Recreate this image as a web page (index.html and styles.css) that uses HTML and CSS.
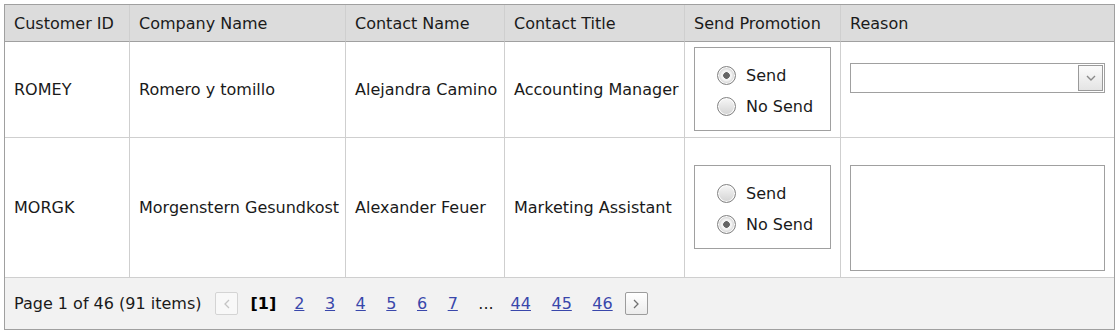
FILE: index.html
```html
<!DOCTYPE html>
<html lang="en">
<head>
    <meta charset="UTF-8">
    <title>Customers - Send Promotion</title>
    <link rel="stylesheet" href="styles.css">
</head>
<body>
    <table class="grid">
        <thead>
            <tr class="grid-header">
                <th class="col-id">Customer ID</th>
                <th class="col-company">Company Name</th>
                <th class="col-contact">Contact Name</th>
                <th class="col-title">Contact Title</th>
                <th class="col-promo">Send Promotion</th>
                <th class="col-reason">Reason</th>
            </tr>
        </thead>
        <tbody>
            <tr class="row-first">
                <td>ROMEY</td>
                <td>Romero y tomillo</td>
                <td>Alejandra Camino</td>
                <td>Accounting Manager</td>
                <td>
                    <div class="radio-box">
                        <label class="radio"><input type="radio" name="promo-romey" checked> Send</label>
                        <label class="radio"><input type="radio" name="promo-romey"> No Send</label>
                    </div>
                </td>
                <td class="reason reason-select">
                    <div class="combo">
                        <span class="combo-text"></span>
                        <span class="combo-btn">
                            <svg width="10" height="6" viewBox="0 0 10 6"><path d="M1 1l4 4 4-4" fill="none" stroke="#8a8a8a" stroke-width="1.4"/></svg>
                        </span>
                    </div>
                </td>
            </tr>
            <tr class="row-second">
                <td>MORGK</td>
                <td>Morgenstern Gesundkost</td>
                <td>Alexander Feuer</td>
                <td>Marketing Assistant</td>
                <td>
                    <div class="radio-box">
                        <label class="radio"><input type="radio" name="promo-morgk"> Send</label>
                        <label class="radio"><input type="radio" name="promo-morgk" checked> No Send</label>
                    </div>
                </td>
                <td class="reason reason-memo">
                    <textarea class="memo"></textarea>
                </td>
            </tr>
        </tbody>
        <tfoot>
            <tr class="grid-pager">
                <td colspan="6">
                    <div class="pager">
                        <span class="pager-summary">Page 1 of 46 (91 items)</span>
                        <span class="pager-btn pager-btn-disabled">
                            <svg width="6" height="10" viewBox="0 0 6 10"><path d="M5 1L1 5l4 4" fill="none" stroke="#c4c4c4" stroke-width="1.3"/></svg>
                        </span>
                        <b class="pager-current">[1]</b>
                        <a href="#" class="pager-num">2</a>
                        <a href="#" class="pager-num">3</a>
                        <a href="#" class="pager-num">4</a>
                        <a href="#" class="pager-num">5</a>
                        <a href="#" class="pager-num">6</a>
                        <a href="#" class="pager-num">7</a>
                        <span class="pager-ellipsis">...</span>
                        <a href="#" class="pager-num">44</a>
                        <a href="#" class="pager-num">45</a>
                        <a href="#" class="pager-num pager-num-last">46</a>
                        <span class="pager-btn pager-next">
                            <svg width="6" height="10" viewBox="0 0 6 10"><path d="M1 1l4 4-4 4" fill="none" stroke="#707070" stroke-width="1.3"/></svg>
                        </span>
                    </div>
                </td>
            </tr>
        </tfoot>
    </table>
</body>
</html>
```

FILE: styles.css
```css
body {
    margin: 4px;
    font-family: "DejaVu Sans", sans-serif;
    font-size: 16px;
    color: #1a1a1a;
    background: #fff;
}
.grid {
    width: 1111px;
    border: 1px solid #a0a0a0;
    border-collapse: separate;
    border-spacing: 0;
    table-layout: fixed;
}
.grid th,
.grid td {
    box-sizing: border-box;
    padding: 0 9px;
    text-align: left;
    font-weight: normal;
    vertical-align: middle;
    white-space: nowrap;
    border-right: 1px solid #cfcfcf;
    border-bottom: 1px solid #cfcfcf;
}
.grid th:last-child,
.grid td:last-child {
    border-right: none;
}
.grid-header th {
    height: 37px;
    background-color: #dcdcdc;
    border-bottom-color: #a0a0a0;
}
.col-id { width: 125px; }
.col-company { width: 216px; }
.col-contact { width: 159px; }
.col-title { width: 180px; }
.col-promo { width: 156px; }
.col-reason { width: 273px; }

.row-first td { height: 96px; }
.row-second td { height: 140px; }

/* radio list */
.radio-box {
    box-sizing: border-box;
    width: 137px;
    height: 84px;
    margin-top: -1px;
    padding: 12px 0 0 23px;
    border: 1px solid #a0a0a0;
    background: #fff;
}
.radio {
    display: flex;
    align-items: center;
    height: 31px;
    cursor: pointer;
}
.radio input {
    appearance: none;
    -webkit-appearance: none;
    box-sizing: border-box;
    width: 19px;
    height: 19px;
    margin: 0 10px 0 -1px;
    border: 1px solid #828282;
    border-radius: 50%;
    background: linear-gradient(#f7f7f7, #d3d3d3);
    box-shadow: inset 0 0 0 1px #fdfdfd;
}
.radio input:checked {
    background: radial-gradient(circle, #666 0 3px, #f4f4f4 3.6px 5px, #d6d6d6 7.5px);
}

/* reason editors */
.grid td.reason {
    vertical-align: top;
}
.grid td.reason-select { padding-top: 21px; }
.grid td.reason-memo { padding-top: 27px; }

.combo {
    box-sizing: border-box;
    display: flex;
    width: 255px;
    height: 30px;
    padding: 1px;
    border: 1px solid #a0a0a0;
    background: #fff;
}
.combo-text {
    flex: 1;
}
.combo-btn {
    box-sizing: border-box;
    display: flex;
    align-items: center;
    justify-content: center;
    width: 25px;
    height: 26px;
    border: 1px solid #9a9a9a;
    background: linear-gradient(#fbfbfb, #e4e4e4);
}
.memo {
    display: block;
    box-sizing: border-box;
    width: 255px;
    height: 106px;
    margin: 0;
    border: 1px solid #a0a0a0;
    resize: none;
    font: inherit;
}

/* pager */
.grid-pager td {
    height: 51px;
    border-bottom: none;
    background-color: #f2f2f2;
}
.pager {
    display: flex;
    align-items: center;
}
.pager-summary {
    margin-right: 14px;
}
.pager-btn {
    box-sizing: border-box;
    display: flex;
    align-items: center;
    justify-content: center;
    width: 23px;
    height: 23px;
    border: 1px solid #9c9c9c;
    border-radius: 2px;
    background: linear-gradient(#ffffff, #ececec);
}
.pager-btn-disabled {
    border-color: #d4d4d4;
    background: #f8f8f8;
}
.pager-current {
    margin: 0 18px 0 12px;
    color: #000;
}
.pager-num {
    margin-right: 20.5px;
    color: #3947ab;
    text-decoration: underline;
}
.pager-ellipsis {
    margin-right: 17px;
}
.pager-num-last {
    margin-right: 12px;
}
```
